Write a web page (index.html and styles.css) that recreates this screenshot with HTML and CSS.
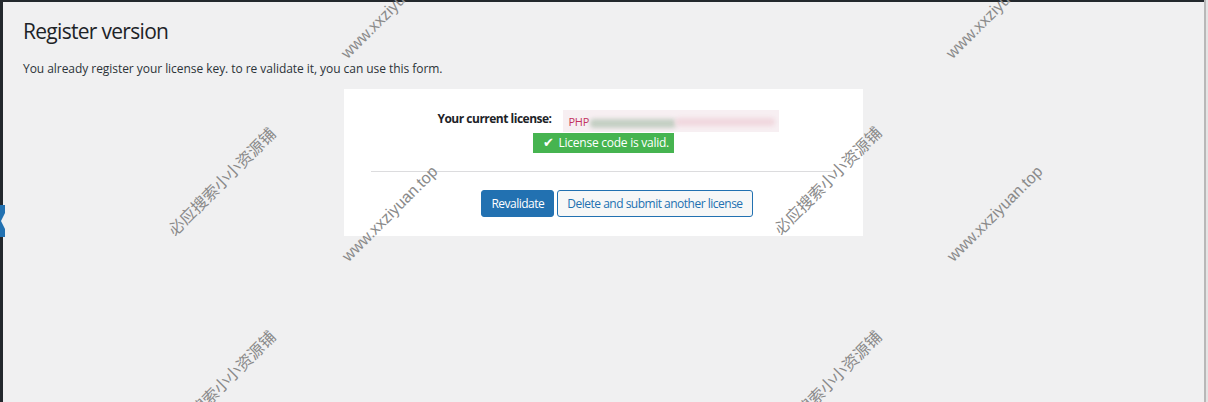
FILE: index.html
```html
<!DOCTYPE html>
<html lang="en">
<head>
    <meta charset="UTF-8">
    <meta name="viewport" content="width=device-width, initial-scale=1.0">
    <title>Register version</title>
    <link rel="stylesheet" href="styles.css">
</head>
<body>
    <div class="frame">
        <div class="menu-edge">
            <svg class="menu-current" width="5" height="32" viewBox="0 0 5 32">
                <rect x="0" y="0" width="5" height="32" fill="#2271b1"/>
                <polygon points="5,8 1,16 5,24" fill="#f0f0f1"/>
            </svg>
        </div>

        <main class="wrap">
            <h1>Register version</h1>
            <p class="intro">You already register your license key. to re validate it, you can use this form.</p>

            <div class="license-box">
                <div class="license-row">
                    <label class="license-label">Your current license:</label>
                    <div class="license-input">
                        <span class="code">PHP</span>
                        <span class="smudge smudge-green"></span>
                        <span class="smudge smudge-pink"></span>
                    </div>
                </div>
                <div class="notice-row">
                    <span class="notice-valid"><span class="tick">✔</span> License code is valid.</span>
                </div>
                <hr class="divider">
                <div class="actions">
                    <button class="btn btn-primary">Revalidate</button>
                    <button class="btn btn-secondary">Delete and submit another license</button>
                </div>
            </div>
        </main>

        <div class="scroll-edge"></div>
    </div>

    <div class="watermarks">
        <span class="mark" style="left: 389px; top: 11px;">www.xxziyuan.top</span>
        <span class="mark" style="left: 994px; top: 11px;">www.xxziyuan.top</span>
        <span class="mark" style="left: 221px; top: 181px;">必应搜索小小资源铺</span>
        <span class="mark" style="left: 827px; top: 180px;">必应搜索小小资源铺</span>
        <span class="mark" style="left: 390px; top: 214px;">www.xxziyuan.top</span>
        <span class="mark" style="left: 995px; top: 214px;">www.xxziyuan.top</span>
        <span class="mark" style="left: 221px; top: 384px;">必应搜索小小资源铺</span>
        <span class="mark" style="left: 827px; top: 384px;">必应搜索小小资源铺</span>
    </div>
</body>
</html>
```

FILE: styles.css
```css
* {
    box-sizing: border-box;
}

body {
    margin: 0;
    height: 402px;
    overflow: hidden;
    font-family: "Open Sans", "Noto Sans", sans-serif;
    font-size: 13px;
    color: #1d2327;
    background-color: #f0f0f1;
    position: relative;
}

.frame {
    display: flex;
    height: 402px;
}

.menu-edge {
    width: 3px;
    flex-shrink: 0;
    background-color: #23282d;
    position: relative;
}

.menu-current {
    position: absolute;
    left: 0;
    top: 205px;
}

.wrap {
    flex: 1;
    border-top: 2px solid #23282d;
    padding: 0 20px;
    background-color: #f0f0f1;
}

.scroll-edge {
    width: 4px;
    flex-shrink: 0;
    border-left: 2px solid #b8b8b8;
    background-color: #e4e4e4;
}

h1 {
    margin: 0;
    padding-top: 14px;
    font-size: 21px;
    font-weight: 400;
    line-height: 30px;
    letter-spacing: -0.7px;
    color: #1d2327;
}

.intro {
    margin: 14px 0 0;
    font-size: 12px;
    line-height: 18px;
    letter-spacing: -0.05px;
    color: #2c3338;
}

.license-box {
    width: 519px;
    margin: 11px auto 0;
    padding: 21px 27px 19px;
    background: #fff;
}

.license-row {
    display: flex;
    align-items: center;
    justify-content: center;
    gap: 11px;
    padding-left: 9px;
}

.license-label {
    font-weight: 700;
    font-size: 12px;
    letter-spacing: -0.5px;
    margin-top: -5px;
    color: #1d2327;
}

.license-input {
    position: relative;
    width: 216px;
    height: 22px;
    background-color: #f7eff2;
    display: flex;
    align-items: center;
    padding-left: 6px;
    overflow: hidden;
}

.license-input .code {
    color: #c3325f;
    font-size: 11px;
    letter-spacing: -0.3px;
}

.smudge {
    position: absolute;
    filter: blur(2px);
    border-radius: 4px;
}

.smudge-green {
    left: 27px;
    top: 9px;
    width: 86px;
    height: 9px;
    background-color: #c4cfc3;
}

.smudge-pink {
    left: 112px;
    top: 8px;
    width: 100px;
    height: 8px;
    background-color: #f0d8de;
}

.notice-row {
    display: flex;
    justify-content: center;
    margin-top: 1px;
}

.notice-valid {
    display: inline-block;
    background-color: #46b450;
    color: #fff;
    height: 20px;
    line-height: 20px;
    padding: 0 5px 0 10px;
    font-size: 12px;
    letter-spacing: -0.25px;
}

.tick {
    font-family: "DejaVu Sans", sans-serif;
    font-size: 13px;
    font-weight: 700;
    margin-right: 2px;
}

.divider {
    border: 0;
    border-top: 1px solid #dcdcde;
    margin: 18px 0 0;
}

.actions {
    display: flex;
    justify-content: center;
    gap: 3px;
    margin-top: 18px;
    padding-left: 27px;
}

.btn {
    font-family: inherit;
    font-size: 12px;
    letter-spacing: -0.5px;
    height: 27px;
    padding: 0 9px;
    border-radius: 3px;
    cursor: pointer;
}

.btn-primary {
    background-color: #2271b1;
    border: 1px solid #2271b1;
    color: #fff;
}

.btn-secondary {
    background-color: #f6f7f7;
    border: 1px solid #2271b1;
    color: #2271b1;
}

.watermarks {
    position: absolute;
    inset: 0;
    pointer-events: none;
    overflow: hidden;
}

.mark {
    position: absolute;
    transform: translate(-50%, -50%) rotate(-45deg);
    font-family: "Liberation Sans", "Noto Sans CJK SC", sans-serif;
    font-size: 16px;
    color: #8a8a8a;
    white-space: nowrap;
}
```
